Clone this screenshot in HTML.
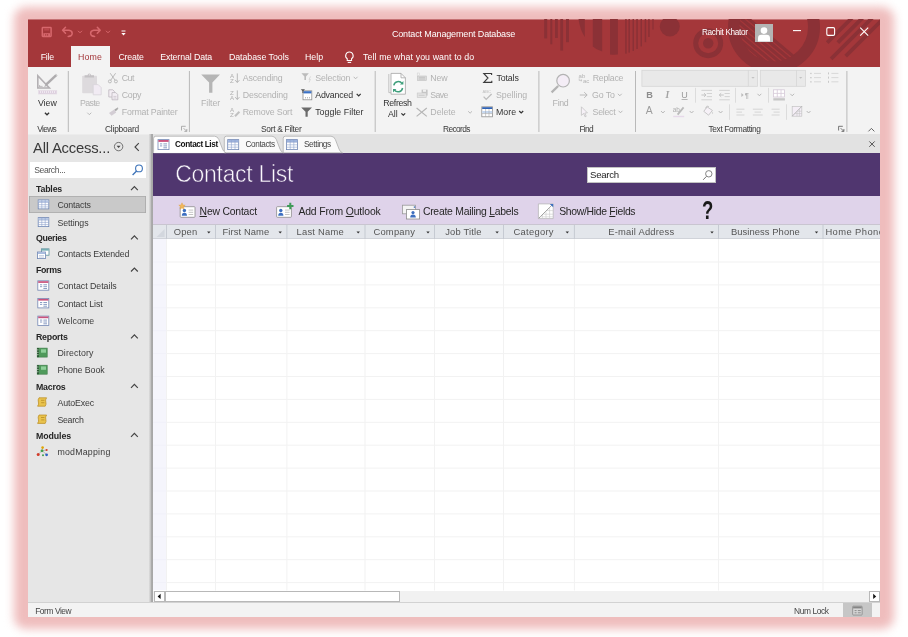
<!DOCTYPE html>
<html><head><meta charset="utf-8"><title>Contact Management Database</title>
<style>
html,body{margin:0;padding:0;background:#fff;}
body{width:908px;height:637px;position:relative;overflow:hidden;font-family:"Liberation Sans",sans-serif;font-size:9px;color:#333;}
#glow{position:absolute;left:14.2px;top:7px;width:879.8px;height:621.5px;background:#efbdbd;border-radius:12px;filter:blur(4.7px);}
#win{opacity:.999;position:absolute;left:28px;top:19px;width:852px;height:598px;background:#fff;overflow:hidden;}
.abs{position:absolute;}
.t{position:absolute;white-space:nowrap;line-height:12px;height:12px;}
#title{position:absolute;left:0;top:0;width:852px;height:49px;background:#a4373a;overflow:hidden;}
#ribbon{position:absolute;left:0;top:48px;width:852px;height:67px;background:#f3f3f3;}
#nav{position:absolute;left:0;top:115px;width:121px;height:468px;background:#e6e6e6;}
#split{position:absolute;left:121px;top:115px;width:4px;height:468px;background:linear-gradient(90deg,#dcdcdc 0,#cfcfcf 1.2px,#ababab 2.4px,#a6a6a6 4px);}
#doc{position:absolute;left:125px;top:115px;width:727px;height:468px;background:#fff;overflow:hidden;}
#status{position:absolute;left:0;top:583px;width:852px;height:15px;background:#f3f3f3;box-shadow:inset 0 1px 0 #d2d2d2;}
.tab{top:31.5px;color:#fff;font-size:8.8px;}
</style></head>
<body>
<div id="glow"></div>
<div id="win">
<div id="title">
<svg class="abs" style="left:0;top:0" width="852" height="49" viewBox="28 19 852 49">
<rect x="28" y="19" width="852" height="0.45" fill="#efbdbd"/>
<g fill="#8b3136">
<rect x="544.2" y="19" width="3" height="19.4"/>
<rect x="550.3" y="19" width="2" height="25.3"/>
<rect x="555" y="19" width="2.8" height="19"/>
<rect x="560.3" y="19" width="2.8" height="31.6"/>
<rect x="566" y="19" width="3" height="23.2"/>
<path d="M578.5 19 L584.8 19 L584.8 37 Q580 30 578.5 19Z"/>
<path d="M592.8 19 L602.2 19 L602.2 51.6 Q596 49.5 592.8 46.4Z"/>
<path d="M610 19 L617.9 19 L617.9 54.6 Q613 55 610 54.4Z"/>
<rect x="625.2" y="19" width="1.5" height="34.7"/>
<rect x="628.4" y="19" width="1.6" height="33.6"/>
<rect x="632.5" y="19" width="1.5" height="32"/>
<rect x="636.3" y="19" width="1.5" height="30"/>
<rect x="640.5" y="19" width="1.5" height="27.4"/>
<rect x="644.7" y="19" width="1.5" height="23.2"/>
<rect x="648.2" y="19" width="1.5" height="18"/>
<rect x="652.4" y="19" width="1.2" height="10.6"/>
<circle cx="669.8" cy="26.5" r="10"/>
<circle cx="708.2" cy="43.2" r="5.2"/>
</g>
<circle cx="708.2" cy="43.2" r="12.5" fill="none" stroke="#8b3136" stroke-width="5"/>
<circle cx="774" cy="27" r="40" fill="none" stroke="#8b3136" stroke-width="12"/>
<clipPath id="cpin"><circle cx="774" cy="27" r="34.5"/></clipPath>
<g clip-path="url(#cpin)"><path d="M722.7 -4.9 L845.3 97.9 L793.9 159.2 L671.3 56.4Z" fill="#8b3136"/><g stroke="#a4373a" stroke-width="1.3"><path d="M720.3 -2.0 L842.8 100.8"/><path d="M717.4 1.4 L840.0 104.2"/><path d="M714.6 4.7 L837.2 107.6"/><path d="M711.8 8.1 L834.4 110.9"/><path d="M709.0 11.5 L831.5 114.3"/><path d="M706.1 14.8 L828.7 117.7"/><path d="M703.3 18.2 L825.9 121.1"/><path d="M700.5 21.6 L823.0 124.4"/><path d="M697.6 25.0 L820.2 127.8"/></g></g>
<g stroke="#8b3136" stroke-width="3.8" fill="none"><path d="M827.2 42.6 L872.2 -2.3999999999999986"/><path d="M837.8 42.6 L882.8 -2.3999999999999986"/><path d="M831.1 58.9 L876.1 13.899999999999999"/><path d="M845.7 56.2 L890.7 11.200000000000003"/></g>
</svg>
<!-- QAT icons -->
<svg class="abs" style="left:0;top:0" width="140" height="26" viewBox="28 19 140 26" fill="none" stroke="#d7686d" stroke-width="1.5">
<rect x="42.3" y="27.6" width="8.8" height="8.8" rx="0.6"/>
<rect x="44.2" y="28" width="5" height="2.6" fill="#b9474b" stroke="none"/>
<rect x="43.400" y="33.200" width="6.600" height="3.200" fill="#d7686d" stroke="none"/><rect x="45.200" y="34.200" width="1.100" height="1.400" fill="#a4373a" stroke="none"/><rect x="47.100" y="34.200" width="1.100" height="1.400" fill="#a4373a" stroke="none"/>
<path d="M65.5 27.3 L62.6 30.3 L65.5 33.3 M62.8 30.3 H69 Q72.2 30.6 72.2 33.4 Q72 36.2 68.2 36.4" stroke-linecap="round" stroke-linejoin="round"/>
<path d="M78 30.8 l2 2 l2 -2" stroke-width="1"/>
<path d="M97.3 27.3 L100.2 30.3 L97.3 33.3 M100 30.3 H93.8 Q90.6 30.6 90.6 33.4 Q90.8 36.2 94.6 36.4" stroke-linecap="round" stroke-linejoin="round"/>
<path d="M106 30.8 l2 2 l2 -2" stroke-width="1"/>
<path d="M121.5 31 h4" stroke="#fff" stroke-width="1"/>
<path d="M121.3 33 h4.4 l-2.2 2.4z" fill="#fff" stroke="none"/>
</svg>
<svg class="abs" style="left:726.5px;top:5px" width="18" height="18" viewBox="0 0 18 18"><rect width="18" height="18" fill="#b4b4b4"/><circle cx="9" cy="6.6" r="3.3" fill="#fff"/><path d="M3 17.5 v-3.4 q0 -3.4 3.4 -3.4 h5.2 q3.4 0 3.4 3.4 v3.4z" fill="#fff"/></svg>
<svg class="abs" style="left:760px;top:4px" width="90" height="18" viewBox="788 23 90 18" fill="none" stroke="#fff" stroke-width="1.1">
<path d="M793 30.6 h8"/>
<rect x="826.8" y="27.6" width="7.8" height="7.8" rx="1.3"/>
<path d="M860.2 27.6 l8 8 M868.2 27.6 l-8 8"/>
</svg>
<!-- tabs -->
<div class="abs" style="left:43px;top:26.600px;width:39px;height:22.400px;background:#f3f3f3"></div>
<svg class="abs" style="left:316.2px;top:31.6px" width="10.8" height="14" viewBox="0 0 10 13" fill="none" stroke="#fff" stroke-width="1"><path d="M5 1 a3.4 3.4 0 0 1 2 6.2 v1.6 h-4 v-1.6 a3.4 3.4 0 0 1 2 -6.200"/><path d="M3.4 10.6 h3.2"/></svg>
<span class="t" style="left:363.9px;top:8.8px;color:#fff;font-size:9.00px;letter-spacing:-0.14px;line-height:12px;height:12px;">Contact Management Database</span>
<span class="t" style="left:674.0px;top:8.1px;color:#fff;font-size:8.20px;letter-spacing:-0.30px;line-height:12px;height:12px;">Rachit Khator</span>
<span class="t" style="left:12.7px;top:31.6px;color:#fff;font-size:8.80px;letter-spacing:-0.22px;line-height:12px;height:12px;">File</span>
<span class="t" style="left:49.9px;top:31.6px;color:#a4373a;font-size:8.80px;letter-spacing:0.16px;line-height:12px;height:12px;">Home</span>
<span class="t" style="left:90.4px;top:31.6px;color:#fff;font-size:8.80px;letter-spacing:-0.17px;line-height:12px;height:12px;">Create</span>
<span class="t" style="left:132.2px;top:31.6px;color:#fff;font-size:8.80px;letter-spacing:-0.11px;line-height:12px;height:12px;">External Data</span>
<span class="t" style="left:200.9px;top:31.6px;color:#fff;font-size:8.80px;letter-spacing:-0.03px;line-height:12px;height:12px;">Database Tools</span>
<span class="t" style="left:277.0px;top:31.6px;color:#fff;font-size:8.80px;letter-spacing:-0.02px;line-height:12px;height:12px;">Help</span>
<span class="t" style="left:335.0px;top:31.6px;color:#fff;font-size:8.80px;letter-spacing:0.10px;line-height:12px;height:12px;">Tell me what you want to do</span>

</div>
<div id="ribbon">
<svg class="abs" style="left:0;top:0" width="852" height="67" viewBox="28 67 852 67"><rect x="67.8" y="71" width="1" height="61" fill="#b9b9b9"/>
<rect x="188.9" y="71" width="1" height="61" fill="#b9b9b9"/>
<rect x="374.7" y="71" width="1" height="61" fill="#b9b9b9"/>
<rect x="538.4" y="71" width="1" height="61" fill="#b9b9b9"/>
<rect x="635.0" y="71" width="1" height="61" fill="#b9b9b9"/>
<rect x="846.4" y="71" width="1" height="61" fill="#b9b9b9"/>
<rect x="695.1" y="87.8" width="0.8" height="14.9" fill="#d6d6d6"/>
<rect x="735.0" y="87.8" width="0.8" height="14.9" fill="#d6d6d6"/>
<rect x="768.1" y="87.8" width="0.8" height="14.9" fill="#d6d6d6"/>
<rect x="729.0" y="104.3" width="0.8" height="15.5" fill="#d6d6d6"/>
<rect x="786.2" y="104.3" width="0.8" height="15.5" fill="#d6d6d6"/>
<path d="M37.8 75.8 V88 H49.4 Z" fill="none" stroke="#b3b0b3" stroke-width="1.6" stroke-linejoin="miter"/>
<path d="M39.2 86.4 h3.4 M39.6 85 v2" stroke="#b3b0b3" stroke-width="0.8"/>
<path d="M56.8 74.6 L45.8 84.8" stroke="#aeacae" stroke-width="2.5"/>
<path d="M55 73.6 L57.8 76.4" stroke="#f3f3f3" stroke-width="0.7"/>
<path d="M46 84.6 L43.8 86.8 L46.6 86.2Z" fill="#aeacae"/>
<rect x="38.6" y="90.6" width="18.2" height="3.4" fill="#ddd0df" stroke="#e4dbe5" stroke-width="0.6"/>
<path d="M40.5 91.2 v1.6 M42.5 91.2 v1.6 M44.5 91.2 v1.6 M46.5 91.2 v1.6 M48.5 91.2 v1.6 M50.5 91.2 v1.6 M52.5 91.2 v1.6 M54.5 91.2 v1.6" stroke="#f6f1f7" stroke-width="0.9"/>
<path d="M44.9 112.8 L47.0 114.8 L49.1 112.8" fill="none" stroke="#333" stroke-width="1.3"/>
<rect x="82.2" y="75.8" width="14.8" height="17.4" rx="0.8" fill="#dddadd"/>
<path d="M84.6 77.4 v-2.2 h3 a1.7 1.7 0 0 1 3.400 0 h3 v2.200z" fill="#c4c1c4"/><circle cx="89.300" cy="74.800" r="0.600" fill="#f3f3f3"/>
<path d="M93.2 84.6 h5 l3 3 v7.2 h-8z" fill="#f1ebf3" stroke="#d8d3d9" stroke-width="0.8"/>
<path d="M87.3 112.7 L89.3 114.7 L91.3 112.7" fill="none" stroke="#b2b2b2" stroke-width="0.9"/>
<g fill="none" stroke="#b4b4b4" stroke-width="0.9"><path d="M110.2 73.2 L115.2 80.4 M115.6 73.2 L110.6 80.4"/><circle cx="109.9" cy="81.4" r="1.5"/><circle cx="115.9" cy="81.4" r="1.5"/></g>
<g fill="#f3eef4" stroke="#bdb6be" stroke-width="0.8"><path d="M108.8 89.8 h4 l1.6 1.6 v5.6 h-5.600z"/><path d="M112 92.600 h3.800 l2 2 v5.200 h-5.800z"/></g><path d="M113.400 96.400 h3 M113.400 98 h3" stroke="#bdb6be" stroke-width="0.6"/>
<path d="M109 113 l5.200 -3.400 l2 3 l-4.600 3.200z" fill="#d3cdd4"/><path d="M114.400 109.600 l2.400 -1.600 l1 1.600 l-2.200 1.600z" fill="#a9a9a9"/><circle cx="117.600" cy="108.200" r="0.700" fill="#a9a9a9"/>
<path d="M181.5 130.5 v-4.2 h4.200" fill="none" stroke="#9a9a9a" stroke-width="0.8"/><path d="M183.6 128.2 l3 3 M186.8 129 v2.400 h-2.400" fill="none" stroke="#9a9a9a" stroke-width="0.8"/>
<path d="M838.6 130.5 v-4.2 h4.200" fill="none" stroke="#555" stroke-width="0.8"/><path d="M840.7 128.2 l3 3 M843.9 129 v2.400 h-2.400" fill="none" stroke="#555" stroke-width="0.8"/>
<path d="M201.200 74.600 H220 L212.400 82.600 V92.800 H209.100 V82.600Z" fill="#b5b5b5"/>
<text x="230" y="77.6" font-family="Liberation Sans" font-size="6.200" fill="#b0b0b0">A</text><text x="230" y="82.9" font-family="Liberation Sans" font-size="6.200" fill="#b0b0b0">Z</text>
<path d="M237.300 73.400 V82.400 M235.200 80.200 L237.300 82.500 L239.400 80.200" fill="none" stroke="#b0b0b0" stroke-width="0.9"/>
<text x="230" y="94.6" font-family="Liberation Sans" font-size="6.200" fill="#b0b0b0">Z</text><text x="230" y="99.9" font-family="Liberation Sans" font-size="6.200" fill="#b0b0b0">A</text>
<path d="M237.300 90.400 V99.400 M235.200 97.200 L237.300 99.500 L239.400 97.200" fill="none" stroke="#b0b0b0" stroke-width="0.9"/>
<text x="230" y="111.6" font-family="Liberation Sans" font-size="6.200" fill="#b0b0b0">A</text><text x="230" y="116.9" font-family="Liberation Sans" font-size="6.200" fill="#b0b0b0">Z</text>
<path d="M235 116.200 l4.400 -4.400" stroke="#c0c0c0" stroke-width="2"/>
<path d="M301.400 73.200 H308.800 L306 76.400 V80 H304.400 V76.400Z" fill="#bcbcbc"/><path d="M310.600 76.400 l-1.600 3 h1.400 l-1.400 3" fill="none" stroke="#cfcfcf" stroke-width="0.7"/>
<path d="M353.7 76.8 L355.6 78.8 L357.5 76.8" fill="none" stroke="#b2b2b2" stroke-width="0.9"/>
<rect x="303" y="90.800" width="8.800" height="9" fill="#fff" stroke="#8f8f8f" stroke-width="0.8"/><rect x="303.400" y="91.200" width="8" height="2.200" fill="#3b72c6"/><path d="M305 97.800 h1 M307 97.800 h1 M309 97.800 h1" stroke="#888" stroke-width="0.8"/><path d="M300.800 89.200 h4.200 l-1.600 1.800 v2 h-1 v-2z" fill="#555"/>
<path d="M356.7 93.8 L358.7 95.8 L360.7 93.8" fill="none" stroke="#333" stroke-width="1.2"/>
<path d="M301.200 107.400 H312 L307.700 111.800 V116.800 H305.500 V111.800Z" fill="#6a6a6a"/>
<path d="M388.800 74 v18.600 h2" fill="none" stroke="#b5b5b5" stroke-width="0.8"/>
<path d="M391 73.400 h10 l4.400 4.400 v16.400 h-14.400z" fill="#fff" stroke="#a4a4a4" stroke-width="0.8"/><path d="M401 73.400 v4.400 h4.400" fill="none" stroke="#a4a4a4" stroke-width="0.8"/>
<g fill="none" stroke="#3f9f7c" stroke-width="1.500"><path d="M393.800 85.400 a4.600 4.600 0 0 1 8.200 -2"/><path d="M402.600 88 a4.600 4.600 0 0 1 -8.200 2"/></g><path d="M403.400 81 v3.400 h-3.400z" fill="#3f9f7c"/><path d="M393 92.400 v-3.400 h3.400z" fill="#3f9f7c"/>
<path d="M401.4 113.3 L403.3 115.2 L405.2 113.3" fill="none" stroke="#333" stroke-width="1.2"/>
<rect x="417.400" y="76" width="9" height="4.600" fill="#d9d9d9" stroke="#c2c2c2" stroke-width="0.6"/><path d="M419 77.400 h6 M419 79 h6" stroke="#bdbdbd" stroke-width="0.700"/><rect x="417.200" y="73" width="2.400" height="2.400" fill="#f3f3f3" stroke="#cfcfcf" stroke-width="0.5"/>
<rect x="421.600" y="89.600" width="6" height="6" fill="#c5c5c5"/><rect x="423" y="89.600" width="3" height="2.200" fill="#f0f0f0"/><rect x="417.200" y="93" width="9" height="4.600" fill="#e4e4e4" stroke="#c6c6c6" stroke-width="0.6"/><path d="M418.600 95.300 h6" stroke="#c0c0c0" stroke-width="0.7"/>
<path d="M416.600 108 L426.800 116.400 M426.800 108 L416.600 116.400" stroke="#b5b5b5" stroke-width="1.200"/>
<path d="M468.2 111.3 L470.1 113.2 L472.0 111.3" fill="none" stroke="#b2b2b2" stroke-width="0.9"/>
<path d="M491.600 75 V73.500 H483.800 L488 78 L483.800 82.400 H491.800 V80.800" fill="none" stroke="#3a3a3a" stroke-width="1.100"/>
<text x="482.600" y="93" font-family="Liberation Sans" font-size="4.200" fill="#c0c0c0" letter-spacing="-0.1">ABC</text><path d="M483.600 96.600 l2.600 2.800 l5.400 -5.400" fill="none" stroke="#bdbdbd" stroke-width="1.300"/>
<rect x="481.800" y="106.800" width="10.800" height="10" fill="#fff" stroke="#8f8f8f" stroke-width="0.8"/><rect x="482.200" y="107.200" width="10" height="1.800" fill="#2f62b5"/><rect x="482.200" y="111" width="10" height="2.400" fill="#c5d7ef"/><path d="M485.600 109 v7.600 M489 109 v7.600 M482 113.600 h10.400" stroke="#a9a9a9" stroke-width="0.600"/>
<path d="M519.2 111.0 L521.2 113.0 L523.2 111.0" fill="none" stroke="#333" stroke-width="1.2"/>
<circle cx="563.100" cy="80.700" r="6.300" fill="#f4edf6" stroke="#b3b3b3" stroke-width="1.200"/><path d="M558.200 86 L551.600 92.400" stroke="#b3b3b3" stroke-width="2.200"/>
<text x="578.600" y="77.600" font-family="Liberation Sans" font-size="6" fill="#b4b4b4">ab</text><text x="583" y="82.900" font-family="Liberation Sans" font-size="6" fill="#b4b4b4">ac</text><path d="M579.200 78.400 v2 h2.600 M580.800 79.300 l1.200 1.100 l-1.200 1.100" fill="none" stroke="#b4b4b4" stroke-width="0.600"/>
<path d="M579.800 95 H587 M584.200 92.200 L587.200 95 L584.200 97.800" fill="none" stroke="#b4b4b4" stroke-width="0.900"/>
<path d="M617.9 93.8 L619.8 95.8 L621.7 93.8" fill="none" stroke="#b2b2b2" stroke-width="0.9"/>
<path d="M581.400 106.800 V115.400 L583.600 113.400 L585 116.800 L586.200 116.300 L584.800 113 L587.400 112.800Z" fill="#f6f1f7" stroke="#bdbdbd" stroke-width="0.700"/>
<path d="M618.6 110.8 L620.5 112.8 L622.4 110.8" fill="none" stroke="#b2b2b2" stroke-width="0.9"/>
<rect x="641.900" y="70.300" width="115.600" height="16" fill="#e9e9e9" stroke="#d6d6d6" stroke-width="0.800"/><path d="M748.400 70.300 v16" stroke="#d6d6d6" stroke-width="0.800"/><path d="M751.400 77 h3.200 l-1.600 1.800z" fill="#c2c2c2"/>
<rect x="760.300" y="70.300" width="45.200" height="16" fill="#e9e9e9" stroke="#d6d6d6" stroke-width="0.800"/><path d="M796.500 70.300 v16" stroke="#d6d6d6" stroke-width="0.800"/><path d="M799.100 77 h3.200 l-1.600 1.800z" fill="#c2c2c2"/>
<rect x="810.200" y="72.8" width="1.400" height="1.300" fill="#c8c8c8"/><path d="M814 73.4 h7" stroke="#d0d0d0" stroke-width="0.800"/>
<rect x="828" y="72.4" width="1" height="2" fill="#c8c8c8"/><path d="M831.400 73.4 h7" stroke="#d0d0d0" stroke-width="0.800"/>
<rect x="810.200" y="77.0" width="1.400" height="1.300" fill="#c8c8c8"/><path d="M814 77.6 h7" stroke="#d0d0d0" stroke-width="0.800"/>
<rect x="828" y="76.6" width="1" height="2" fill="#c8c8c8"/><path d="M831.400 77.6 h7" stroke="#d0d0d0" stroke-width="0.800"/>
<rect x="810.200" y="81.2" width="1.400" height="1.300" fill="#c8c8c8"/><path d="M814 81.8 h7" stroke="#d0d0d0" stroke-width="0.800"/>
<rect x="828" y="80.8" width="1" height="2" fill="#c8c8c8"/><path d="M831.400 81.8 h7" stroke="#d0d0d0" stroke-width="0.800"/>
<text x="646.300" y="98.400" font-family="Liberation Sans" font-weight="bold" font-size="9.200" fill="#8d8d8d">B</text>
<text x="665.600" y="98.400" font-family="Liberation Serif" font-style="italic" font-weight="bold" font-size="9.600" fill="#a3a3a3">I</text>
<text x="681.300" y="98" font-family="Liberation Sans" font-size="9" fill="#9a9a9a">U</text><path d="M681.600 99.500 h6" stroke="#9a9a9a" stroke-width="0.700"/>
<path d="M701.4 90.400 h10.600 M701.4 99.800 h10.600 M706.8 93.500 h5.200 M706.8 96.600 h5.200" stroke="#c4c4c4" stroke-width="0.700"/>
<path d="M701.4 95 h4.400 M704.0 93.200 l1.900 1.800 l-1.900 1.800" fill="none" stroke="#b8b8b8" stroke-width="0.800"/>
<path d="M719.2 90.400 h10.600 M719.2 99.800 h10.600 M724.6 93.500 h5.200 M724.6 96.600 h5.200" stroke="#c4c4c4" stroke-width="0.700"/>
<path d="M719.4000000000001 95 h4.400 M721.2 93.200 l-1.900 1.800 l1.900 1.800" fill="none" stroke="#b8b8b8" stroke-width="0.800"/>
<path d="M741.400 93 l2.200 2 l-2.200 2z" fill="#b8b8b8"/><text x="744.800" y="98.200" font-family="Liberation Sans" font-weight="bold" font-size="7.400" fill="#b4b4b4">¶</text>
<path d="M757.5 93.8 L759.4 95.8 L761.3 93.8" fill="none" stroke="#b2b2b2" stroke-width="0.9"/>
<rect x="773.600" y="89.800" width="11" height="7.200" fill="#fff" stroke="#d5c9d8" stroke-width="0.800"/><path d="M777.300 89.800 v7.200 M781 89.800 v7.200 M773.600 93.400 h11" stroke="#d5c9d8" stroke-width="0.800"/><rect x="773.300" y="98.200" width="11.600" height="2.300" fill="#c6c6c6"/>
<path d="M790.3 93.8 L792.2 95.8 L794.1 93.8" fill="none" stroke="#b2b2b2" stroke-width="0.9"/>
<text x="645.800" y="114.400" font-family="Liberation Sans" font-size="10.400" fill="#9c9c9c">A</text>
<path d="M661.0 111.0 L662.9 113.0 L664.8 111.0" fill="none" stroke="#b2b2b2" stroke-width="0.9"/>
<text x="672.800" y="111.800" font-family="Liberation Sans" font-size="6.400" fill="#adadad">ab</text><path d="M683.600 107.400 L677.600 114.600" stroke="#b9b9b9" stroke-width="1.800"/><rect x="673.200" y="115.800" width="11" height="1.400" fill="#e7d9ea"/>
<path d="M689.7 111.0 L691.6 113.0 L693.5 111.0" fill="none" stroke="#b2b2b2" stroke-width="0.9"/>
<path d="M707 106.800 L703.800 111.400 L708.600 115.200 L712.400 110.400 Z" fill="#f6f1f7" stroke="#bdbdbd" stroke-width="0.800"/><path d="M706 108.600 a1.600 1.600 0 0 1 3 -1.600" fill="none" stroke="#bdbdbd" stroke-width="0.700"/><path d="M712.600 111.400 q1 1.800 0.200 2.800 q-0.900 -1.100 -0.200 -2.800" fill="#bdbdbd"/>
<path d="M718.7 111.0 L720.6 113.0 L722.5 111.0" fill="none" stroke="#b2b2b2" stroke-width="0.9"/>
<path d="M736.4 109.2 h8" stroke="#cdcdcd" stroke-width="0.800"/>
<path d="M736.4 112.1 h5.6" stroke="#cdcdcd" stroke-width="0.800"/>
<path d="M736.4 115.0 h8" stroke="#cdcdcd" stroke-width="0.800"/>
<path d="M752.9 109.2 h9.8" stroke="#cdcdcd" stroke-width="0.800"/>
<path d="M754.6 112.1 h6.4" stroke="#cdcdcd" stroke-width="0.800"/>
<path d="M752.9 115.0 h9.8" stroke="#cdcdcd" stroke-width="0.800"/>
<path d="M771.6 109.2 h8" stroke="#cdcdcd" stroke-width="0.800"/>
<path d="M773.6 112.1 h6" stroke="#cdcdcd" stroke-width="0.800"/>
<path d="M771.6 115.0 h8" stroke="#cdcdcd" stroke-width="0.800"/>
<rect x="792.200" y="106.400" width="9.600" height="9.800" fill="#f4eef6" stroke="#c4c4c4" stroke-width="0.700"/><path d="M801.800 106.400 L792.200 116.200" stroke="#aaa" stroke-width="0.800"/><path d="M797 111.400 v4.800 M799.400 109 v7.200 M794.600 113.600 h7.200 M797.400 111.200 h4.400" stroke="#c4c4c4" stroke-width="0.600"/>
<path d="M806.7 111.0 L808.6 113.0 L810.5 111.0" fill="none" stroke="#b2b2b2" stroke-width="0.9"/>
<path d="M868.400 131.400 L871.400 128.400 L874.400 131.400" fill="none" stroke="#555" stroke-width="0.900"/></svg>
<span class="t" style="left:9.9px;top:30.0px;color:#333;font-size:8.80px;letter-spacing:0.02px;line-height:12px;height:12px;">View</span>
<span class="t" style="left:9.2px;top:56.0px;color:#383838;font-size:8.40px;letter-spacing:-0.65px;line-height:12px;height:12px;">Views</span>
<span class="t" style="left:52.0px;top:30.0px;color:#b2b2b2;font-size:8.80px;letter-spacing:-0.58px;line-height:12px;height:12px;">Paste</span>
<span class="t" style="left:93.7px;top:5.4px;color:#b2b2b2;font-size:8.80px;letter-spacing:-0.43px;line-height:12px;height:12px;">Cut</span>
<span class="t" style="left:93.7px;top:22.4px;color:#b2b2b2;font-size:8.80px;letter-spacing:-0.24px;line-height:12px;height:12px;">Copy</span>
<span class="t" style="left:93.7px;top:39.2px;color:#b2b2b2;font-size:8.80px;letter-spacing:-0.16px;line-height:12px;height:12px;">Format Painter</span>
<span class="t" style="left:77.0px;top:56.0px;color:#383838;font-size:8.40px;letter-spacing:-0.21px;line-height:12px;height:12px;">Clipboard</span>
<span class="t" style="left:173.0px;top:30.0px;color:#b2b2b2;font-size:8.80px;letter-spacing:-0.08px;line-height:12px;height:12px;">Filter</span>
<span class="t" style="left:214.7px;top:5.4px;color:#b2b2b2;font-size:8.80px;letter-spacing:-0.13px;line-height:12px;height:12px;">Ascending</span>
<span class="t" style="left:214.7px;top:22.4px;color:#b2b2b2;font-size:8.80px;letter-spacing:-0.14px;line-height:12px;height:12px;">Descending</span>
<span class="t" style="left:214.7px;top:39.2px;color:#b2b2b2;font-size:8.80px;letter-spacing:-0.17px;line-height:12px;height:12px;">Remove Sort</span>
<span class="t" style="left:287.2px;top:5.4px;color:#b2b2b2;font-size:8.80px;letter-spacing:-0.11px;line-height:12px;height:12px;">Selection</span>
<span class="t" style="left:287.2px;top:22.4px;color:#333;font-size:8.80px;letter-spacing:-0.17px;line-height:12px;height:12px;">Advanced</span>
<span class="t" style="left:287.2px;top:39.2px;color:#333;font-size:8.80px;letter-spacing:0.03px;line-height:12px;height:12px;">Toggle Filter</span>
<span class="t" style="left:233.0px;top:56.0px;color:#383838;font-size:8.40px;letter-spacing:-0.29px;line-height:12px;height:12px;">Sort &amp; Filter</span>
<span class="t" style="left:355.3px;top:30.0px;color:#333;font-size:8.80px;letter-spacing:-0.36px;line-height:12px;height:12px;">Refresh</span>
<span class="t" style="left:359.9px;top:41.4px;color:#333;font-size:8.80px;letter-spacing:0.04px;line-height:12px;height:12px;">All</span>
<span class="t" style="left:402.3px;top:5.4px;color:#b2b2b2;font-size:8.80px;letter-spacing:-0.17px;line-height:12px;height:12px;">New</span>
<span class="t" style="left:402.3px;top:22.4px;color:#b2b2b2;font-size:8.77px;letter-spacing:-0.60px;line-height:12px;height:12px;">Save</span>
<span class="t" style="left:402.3px;top:39.2px;color:#b2b2b2;font-size:8.80px;letter-spacing:-0.02px;line-height:12px;height:12px;">Delete</span>
<span class="t" style="left:468.5px;top:5.4px;color:#333;font-size:8.80px;letter-spacing:-0.13px;line-height:12px;height:12px;">Totals</span>
<span class="t" style="left:467.9px;top:22.4px;color:#b2b2b2;font-size:8.80px;letter-spacing:0.01px;line-height:12px;height:12px;">Spelling</span>
<span class="t" style="left:467.9px;top:39.2px;color:#333;font-size:8.80px;letter-spacing:0.09px;line-height:12px;height:12px;">More</span>
<span class="t" style="left:415.0px;top:56.0px;color:#383838;font-size:8.40px;letter-spacing:-0.61px;line-height:12px;height:12px;">Records</span>
<span class="t" style="left:524.6px;top:30.0px;color:#b2b2b2;font-size:8.80px;letter-spacing:-0.33px;line-height:12px;height:12px;">Find</span>
<span class="t" style="left:564.8px;top:5.4px;color:#b2b2b2;font-size:8.80px;letter-spacing:-0.28px;line-height:12px;height:12px;">Replace</span>
<span class="t" style="left:564.0px;top:22.4px;color:#b2b2b2;font-size:8.80px;letter-spacing:-0.08px;line-height:12px;height:12px;">Go To</span>
<span class="t" style="left:564.6px;top:39.2px;color:#b2b2b2;font-size:8.80px;letter-spacing:-0.28px;line-height:12px;height:12px;">Select</span>
<span class="t" style="left:551.4px;top:56.0px;color:#383838;font-size:8.40px;letter-spacing:-0.66px;line-height:12px;height:12px;">Find</span>
<span class="t" style="left:680.5px;top:56.0px;color:#383838;font-size:8.40px;letter-spacing:-0.37px;line-height:12px;height:12px;">Text Formatting</span>

</div>
<div id="nav">
<div class="abs" style="left:0;top:0;width:121px;height:0.6px;background:#ececec"></div>
<div class="abs" style="left:1.5px;top:27.8px;width:116.6px;height:16.5px;background:#fff"></div>
<div class="abs" style="left:1.2px;top:62px;width:116.900px;height:17.300px;background:#c9c9c9;box-shadow:inset 0 0 0 0.8px #a9a9a9"></div>
<svg class="abs" style="left:0;top:0" width="121" height="468" viewBox="28 134 121 468"><circle cx="118.600" cy="146.600" r="4.200" fill="none" stroke="#555" stroke-width="0.800"/><path d="M116.600 145.800 h4 l-2 2.200z" fill="#444"/>
<path d="M138.800 143.200 L135 147 L138.800 150.800" fill="none" stroke="#444" stroke-width="1.100"/>
<circle cx="139" cy="168.400" r="3.400" fill="none" stroke="#3c72b8" stroke-width="1.100"/><path d="M136.600 171 L132.600 175" stroke="#3c72b8" stroke-width="1.300"/>
<path d="M131 190.1 L134.400 186.7 L137.800 190.1" fill="none" stroke="#444" stroke-width="1.2"/>
<rect x="38.200" y="199.9" width="10.600" height="9" fill="#fff" stroke="#6f86b3" stroke-width="0.800"/><rect x="38.600" y="200.3" width="9.800" height="1.900" fill="#b9c9e6"/><path d="M41.800 199.9 v9 M45.200 199.9 v9 M38.200 202.4 h10.600 M38.200 204.7 h10.600 M38.200 206.9 h10.600" stroke="#8fa3cc" stroke-width="0.600"/>
<rect x="38.200" y="217.6" width="10.600" height="9" fill="#fff" stroke="#6f86b3" stroke-width="0.800"/><rect x="38.600" y="218.0" width="9.800" height="1.900" fill="#b9c9e6"/><path d="M41.800 217.6 v9 M45.200 217.6 v9 M38.200 220.1 h10.600 M38.200 222.4 h10.600 M38.200 224.6 h10.600" stroke="#8fa3cc" stroke-width="0.600"/>
<path d="M131 239.3 L134.400 235.9 L137.800 239.3" fill="none" stroke="#444" stroke-width="1.2"/>
<rect x="41.600" y="248.8" width="7.400" height="6.400" fill="#fff" stroke="#5b8f9a" stroke-width="0.800"/><rect x="41.900" y="249.1" width="6.800" height="1.500" fill="#69a7ad"/><rect x="37.600" y="252.0" width="8" height="6.600" fill="#fff" stroke="#6f86b3" stroke-width="0.800"/><rect x="37.900" y="252.3" width="7.400" height="1.600" fill="#9fb5dc"/><path d="M39 255.6 h5 M39 257.1 h5" stroke="#9fb0cf" stroke-width="0.600"/>
<path d="M131 271.5 L134.400 268.1 L137.800 271.5" fill="none" stroke="#444" stroke-width="1.2"/>
<rect x="37.800" y="280.8" width="11" height="9.400" fill="#fff" stroke="#7488b5" stroke-width="0.800"/><rect x="38.200" y="281.2" width="10.200" height="1.700" fill="#c9527d"/><path d="M40 284.8 h2.200 M43.400 284.8 h3.600 M40 286.7 h2.200 M43.400 286.7 h3.600 M43.400 288.5 h3.600" stroke="#7f93bd" stroke-width="0.900"/>
<rect x="37.800" y="298.5" width="11" height="9.400" fill="#fff" stroke="#7488b5" stroke-width="0.800"/><rect x="38.200" y="298.9" width="10.200" height="1.700" fill="#c9527d"/><path d="M40 302.5 h2.200 M43.400 302.5 h3.600 M40 304.4 h2.200 M43.400 304.4 h3.600 M43.400 306.2 h3.600" stroke="#7f93bd" stroke-width="0.900"/>
<rect x="37.800" y="316.1" width="11" height="9.400" fill="#fff" stroke="#7488b5" stroke-width="0.800"/><rect x="38.200" y="316.5" width="10.200" height="1.700" fill="#c9527d"/><path d="M40 320.1 h2.200 M43.400 320.1 h3.600 M40 322.0 h2.200 M43.400 322.0 h3.600 M43.400 323.8 h3.600" stroke="#7f93bd" stroke-width="0.900"/>
<path d="M131 338.3 L134.400 334.9 L137.800 338.3" fill="none" stroke="#444" stroke-width="1.2"/>
<rect x="37.200" y="348.1" width="10" height="9" fill="#4f9a5b" stroke="#3c7b47" stroke-width="0.600"/><rect x="37" y="348.1" width="2" height="9" fill="#2d5a35"/><rect x="41" y="349.3" width="5" height="3.400" fill="#8fd09a"/><path d="M37 349.9 h1.600 M37 352.3 h1.600 M37 354.7 h1.600" stroke="#cfe6d2" stroke-width="0.700"/>
<rect x="37.200" y="365.2" width="10" height="9" fill="#4f9a5b" stroke="#3c7b47" stroke-width="0.600"/><rect x="37" y="365.2" width="2" height="9" fill="#2d5a35"/><rect x="41" y="366.4" width="5" height="3.400" fill="#8fd09a"/><path d="M37 367.0 h1.600 M37 369.4 h1.600 M37 371.8 h1.600" stroke="#cfe6d2" stroke-width="0.700"/>
<path d="M131 387.8 L134.400 384.4 L137.800 387.8" fill="none" stroke="#444" stroke-width="1.2"/>
<path d="M39 397.8 h7.600 q-1.600 2 -0.800 4.200 q0.800 2.200 -0.600 4.200 h-7.600 q1.600 -2 0.800 -4.200 q-0.800 -2.200 0.600 -4.200z" fill="#e9c34d" stroke="#b98a1e" stroke-width="0.700"/><path d="M41 400.3 h3.400 M41.200 402.7 h3.200" stroke="#a87a14" stroke-width="0.600"/>
<path d="M39 415.0 h7.600 q-1.600 2 -0.800 4.200 q0.800 2.200 -0.600 4.200 h-7.600 q1.600 -2 0.800 -4.200 q-0.800 -2.200 0.600 -4.200z" fill="#e9c34d" stroke="#b98a1e" stroke-width="0.700"/><path d="M41 417.5 h3.400 M41.200 419.9 h3.200" stroke="#a87a14" stroke-width="0.600"/>
<path d="M131 436.8 L134.400 433.4 L137.800 436.8" fill="none" stroke="#444" stroke-width="1.2"/>
<path d="M38 454.6 L42 450.6 L46.600 454.6 M42 450.6 L42.600 447.6 M42 450.6 L46.600 450.1" stroke="#999" stroke-width="0.600" fill="none"/><circle cx="42.600" cy="447.6" r="1.300" fill="#e2a400"/><circle cx="42" cy="450.8" r="1.400" fill="#3f9f4a"/><circle cx="38.200" cy="454.6" r="1.500" fill="#d23c2a"/><circle cx="46.600" cy="454.8" r="1.400" fill="#2d62c4"/><circle cx="46.600" cy="450.0" r="1.100" fill="#d23c2a"/><circle cx="43" cy="455.2" r="1" fill="#3f9f4a"/></svg>
<span class="t" style="left:5.0px;top:3.9px;color:#3a3a3a;font-size:14.80px;letter-spacing:-0.21px;line-height:20px;height:20px;">All Access...</span>
<span class="t" style="left:6.2px;top:30.3px;color:#555;font-size:8.60px;letter-spacing:-0.38px;line-height:12px;height:12px;">Search...</span>
<span class="t" style="left:7.9px;top:49.0px;color:#262626;font-size:8.80px;letter-spacing:-0.17px;line-height:12px;height:12px;font-weight:bold;">Tables</span>
<span class="t" style="left:29.4px;top:65.0px;color:#3b3b3b;font-size:8.80px;letter-spacing:-0.18px;line-height:12px;height:12px;">Contacts</span>
<span class="t" style="left:29.4px;top:82.7px;color:#3b3b3b;font-size:8.80px;letter-spacing:-0.09px;line-height:12px;height:12px;">Settings</span>
<span class="t" style="left:7.9px;top:98.2px;color:#262626;font-size:8.80px;letter-spacing:-0.31px;line-height:12px;height:12px;font-weight:bold;">Queries</span>
<span class="t" style="left:29.4px;top:114.4px;color:#3b3b3b;font-size:8.80px;letter-spacing:-0.14px;line-height:12px;height:12px;">Contacts Extended</span>
<span class="t" style="left:7.9px;top:130.4px;color:#262626;font-size:8.80px;letter-spacing:-0.30px;line-height:12px;height:12px;font-weight:bold;">Forms</span>
<span class="t" style="left:29.4px;top:146.1px;color:#3b3b3b;font-size:8.80px;letter-spacing:-0.02px;line-height:12px;height:12px;">Contact Details</span>
<span class="t" style="left:29.4px;top:163.8px;color:#3b3b3b;font-size:8.80px;letter-spacing:-0.11px;line-height:12px;height:12px;">Contact List</span>
<span class="t" style="left:29.4px;top:181.4px;color:#3b3b3b;font-size:8.80px;letter-spacing:0.06px;line-height:12px;height:12px;">Welcome</span>
<span class="t" style="left:7.9px;top:197.2px;color:#262626;font-size:8.80px;letter-spacing:-0.19px;line-height:12px;height:12px;font-weight:bold;">Reports</span>
<span class="t" style="left:29.4px;top:213.3px;color:#3b3b3b;font-size:8.80px;letter-spacing:0.10px;line-height:12px;height:12px;">Directory</span>
<span class="t" style="left:29.4px;top:230.4px;color:#3b3b3b;font-size:8.80px;letter-spacing:-0.08px;line-height:12px;height:12px;">Phone Book</span>
<span class="t" style="left:7.9px;top:246.7px;color:#262626;font-size:8.80px;letter-spacing:-0.19px;line-height:12px;height:12px;font-weight:bold;">Macros</span>
<span class="t" style="left:29.4px;top:262.7px;color:#3b3b3b;font-size:8.80px;letter-spacing:-0.12px;line-height:12px;height:12px;">AutoExec</span>
<span class="t" style="left:29.4px;top:279.9px;color:#3b3b3b;font-size:8.80px;letter-spacing:-0.28px;line-height:12px;height:12px;">Search</span>
<span class="t" style="left:7.9px;top:295.7px;color:#262626;font-size:8.80px;letter-spacing:-0.07px;line-height:12px;height:12px;font-weight:bold;">Modules</span>
<span class="t" style="left:29.4px;top:312.2px;color:#3b3b3b;font-size:8.80px;letter-spacing:0.23px;line-height:12px;height:12px;">modMapping</span>

</div>
<div id="split"></div>
<div id="doc">
<div class="abs" style="left:0.0px;top:0.0px;width:727.0px;height:19.0px;background:#e2e2e2;"></div>
<div class="abs" style="left:0.0px;top:18.6px;width:727.0px;height:43.4px;background:#50366f;"></div>
<div class="abs" style="left:0.0px;top:62.0px;width:727.0px;height:28.4px;background:#dfd3ea;"></div>
<div class="abs" style="left:0.0px;top:90.4px;width:727.0px;height:14.8px;background:#e3e6eb;border-top:0.6px solid #c9c5d0;border-bottom:0.6px solid #d0d3d9;box-sizing:border-box;"></div>
<div class="abs" style="left:0.0px;top:105.2px;width:13.5px;height:351.3px;background:#f5f5fc;"></div>
<div class="abs" style="left:434.0px;top:33.4px;width:129.0px;height:15.4px;background:#fff;border:0.8px solid #c2c2c2;box-sizing:border-box;"></div>
<div class="abs" style="left:0.0px;top:456.5px;width:727.0px;height:11.5px;background:#f1f1f1;"></div>
<div class="abs" style="left:0.6px;top:456.8px;width:11.0px;height:11.2px;background:#fff;border:0.8px solid #b8b8b8;box-sizing:border-box;"></div>
<div class="abs" style="left:11.8px;top:456.8px;width:234.8px;height:11.2px;background:#fff;border:0.8px solid #b8b8b8;box-sizing:border-box;"></div>
<div class="abs" style="left:716.0px;top:456.8px;width:11.0px;height:11.2px;background:#fff;border:0.8px solid #b8b8b8;box-sizing:border-box;"></div>
<svg class="abs" style="left:0;top:0" width="727" height="468" viewBox="153 134 727 468"><rect x="166.0" y="239.2" width="1" height="351.3" fill="#f2f2f2"/>
<rect x="215.0" y="239.2" width="1" height="351.3" fill="#f2f2f2"/>
<rect x="286.4" y="239.2" width="1" height="351.3" fill="#f2f2f2"/>
<rect x="364.5" y="239.2" width="1" height="351.3" fill="#f2f2f2"/>
<rect x="434.0" y="239.2" width="1" height="351.3" fill="#f2f2f2"/>
<rect x="503.0" y="239.2" width="1" height="351.3" fill="#f2f2f2"/>
<rect x="573.9" y="239.2" width="1" height="351.3" fill="#f2f2f2"/>
<rect x="718.0" y="239.2" width="1" height="351.3" fill="#f2f2f2"/>
<rect x="822.5" y="239.2" width="1" height="351.3" fill="#f2f2f2"/>
<rect x="166.5" y="261.5" width="713.5" height="1" fill="#f2f2f2"/>
<rect x="153" y="261.5" width="13.5" height="1" fill="#f1f1f9"/>
<rect x="166.5" y="284.4" width="713.5" height="1" fill="#f2f2f2"/>
<rect x="153" y="284.4" width="13.5" height="1" fill="#f1f1f9"/>
<rect x="166.5" y="307.3" width="713.5" height="1" fill="#f2f2f2"/>
<rect x="153" y="307.3" width="13.5" height="1" fill="#f1f1f9"/>
<rect x="166.5" y="330.2" width="713.5" height="1" fill="#f2f2f2"/>
<rect x="153" y="330.2" width="13.5" height="1" fill="#f1f1f9"/>
<rect x="166.5" y="353.1" width="713.5" height="1" fill="#f2f2f2"/>
<rect x="153" y="353.1" width="13.5" height="1" fill="#f1f1f9"/>
<rect x="166.5" y="376.0" width="713.5" height="1" fill="#f2f2f2"/>
<rect x="153" y="376.0" width="13.5" height="1" fill="#f1f1f9"/>
<rect x="166.5" y="398.9" width="713.5" height="1" fill="#f2f2f2"/>
<rect x="153" y="398.9" width="13.5" height="1" fill="#f1f1f9"/>
<rect x="166.5" y="421.8" width="713.5" height="1" fill="#f2f2f2"/>
<rect x="153" y="421.8" width="13.5" height="1" fill="#f1f1f9"/>
<rect x="166.5" y="444.7" width="713.5" height="1" fill="#f2f2f2"/>
<rect x="153" y="444.7" width="13.5" height="1" fill="#f1f1f9"/>
<rect x="166.5" y="467.6" width="713.5" height="1" fill="#f2f2f2"/>
<rect x="153" y="467.6" width="13.5" height="1" fill="#f1f1f9"/>
<rect x="166.5" y="490.5" width="713.5" height="1" fill="#f2f2f2"/>
<rect x="153" y="490.5" width="13.5" height="1" fill="#f1f1f9"/>
<rect x="166.5" y="513.4" width="713.5" height="1" fill="#f2f2f2"/>
<rect x="153" y="513.4" width="13.5" height="1" fill="#f1f1f9"/>
<rect x="166.5" y="536.3" width="713.5" height="1" fill="#f2f2f2"/>
<rect x="153" y="536.3" width="13.5" height="1" fill="#f1f1f9"/>
<rect x="166.5" y="559.2" width="713.5" height="1" fill="#f2f2f2"/>
<rect x="153" y="559.2" width="13.5" height="1" fill="#f1f1f9"/>
<rect x="166.5" y="582.1" width="713.5" height="1" fill="#f2f2f2"/>
<rect x="153" y="582.1" width="13.5" height="1" fill="#f1f1f9"/>
<rect x="166.0" y="225" width="1" height="14" fill="#c6cad2"/>
<rect x="215.0" y="225" width="1" height="14" fill="#c6cad2"/>
<rect x="286.4" y="225" width="1" height="14" fill="#c6cad2"/>
<rect x="364.5" y="225" width="1" height="14" fill="#c6cad2"/>
<rect x="434.0" y="225" width="1" height="14" fill="#c6cad2"/>
<rect x="503.0" y="225" width="1" height="14" fill="#c6cad2"/>
<rect x="573.9" y="225" width="1" height="14" fill="#c6cad2"/>
<rect x="718.0" y="225" width="1" height="14" fill="#c6cad2"/>
<rect x="822.5" y="225" width="1" height="14" fill="#c6cad2"/>
<path d="M164.6 229 V237 H156.6Z" fill="#d3d7de"/>
<path d="M207.1 231.400 h3.400 l-1.700 2z" fill="#333"/>
<path d="M278.5 231.400 h3.400 l-1.700 2z" fill="#333"/>
<path d="M356.5 231.400 h3.400 l-1.700 2z" fill="#333"/>
<path d="M426.3 231.400 h3.400 l-1.700 2z" fill="#333"/>
<path d="M495.4 231.400 h3.400 l-1.700 2z" fill="#333"/>
<path d="M565.6 231.400 h3.400 l-1.700 2z" fill="#333"/>
<path d="M710.3 231.400 h3.400 l-1.700 2z" fill="#333"/>
<path d="M814.8 231.400 h3.400 l-1.700 2z" fill="#333"/>
<path d="M283.2 152.800 V138.400 Q283.2 136.200 285.4 136.200 H331 Q334 136.200 335.4 139.600 L339 149 Q340 152 342.5 152.800Z" fill="#fafafa" stroke="#adadad" stroke-width="0.800"/>
<path d="M224.3 152.800 V138.400 Q224.3 136.200 226.5 136.200 H272 Q275 136.200 276.4 139.600 L280 149 Q281 152 283.5 152.800Z" fill="#fafafa" stroke="#adadad" stroke-width="0.800"/>
<path d="M153.6 152.800 V138.400 Q153.6 136.200 155.79999999999998 136.200 H214.5 Q217.5 136.200 218.9 139.600 L222.5 149 Q223.5 152 226.0 152.800Z" fill="#fff" stroke="#adadad" stroke-width="0.800"/>
<rect x="153.900" y="151.600" width="70.400" height="1.300" fill="#fff"/>
<rect x="158" y="139.6" width="11" height="10" fill="#fff" stroke="#7488b5" stroke-width="0.800"/><rect x="158.4" y="140.0" width="10.200" height="1.900" fill="#c9527d"/><path d="M160 143.9 h2.200 M163.4 143.9 h3.600 M160 145.9 h2.200 M163.4 145.9 h3.600 M163.4 147.8 h3.600" stroke="#7f93bd" stroke-width="0.900"/>
<rect x="227.7" y="139.6" width="11" height="10" fill="#fff" stroke="#6f86b3" stroke-width="0.800"/><rect x="228.1" y="140.0" width="10.200" height="2.100" fill="#9db3dd"/><path d="M231.39999999999998 139.6 v10 M235.0 139.6 v10 M227.7 142.3 h11 M227.7 144.8 h11 M227.7 147.2 h11" stroke="#8fa3cc" stroke-width="0.600"/>
<rect x="286.5" y="139.6" width="11" height="10" fill="#fff" stroke="#6f86b3" stroke-width="0.800"/><rect x="286.9" y="140.0" width="10.200" height="2.100" fill="#9db3dd"/><path d="M290.2 139.6 v10 M293.8 139.6 v10 M286.5 142.3 h11 M286.5 144.8 h11 M286.5 147.2 h11" stroke="#8fa3cc" stroke-width="0.600"/>
<path d="M869.300 141.400 l5.400 5.400 M874.700 141.400 l-5.400 5.400" stroke="#444" stroke-width="0.900"/>
<circle cx="708.800" cy="173.800" r="3.200" fill="none" stroke="#777" stroke-width="0.900"/><path d="M706.500 176.300 L703.200 179.800" stroke="#777" stroke-width="1"/>
<rect x="180.2" y="206.7" width="14.8" height="10.6" rx="0.800" fill="#fff" stroke="#8c8c8c" stroke-width="0.800"/><circle cx="184.39999999999998" cy="210.5" r="1.700" fill="#3d6fc0"/><path d="M181.79999999999998 215.7 q0 -3 2.600 -3 q2.600 0 2.600 3z" fill="#3d6fc0"/><path d="M188.6 210.1 h4.600 M188.6 212.29999999999998 h4.600 M188.6 214.5 h4.600" stroke="#b5b5b5" stroke-width="0.800"/>
<path d="M182 202.800 l0.900 2.200 l2.300 0.200 l-1.700 1.600 l0.500 2.300 l-2 -1.200 l-2 1.200 l0.500 -2.300 l-1.700 -1.600 l2.300 -0.200z" fill="#f2b85c" stroke="#e09a2c" stroke-width="0.400"/>
<rect x="276.6" y="206.7" width="14.8" height="10.6" rx="0.800" fill="#fff" stroke="#8c8c8c" stroke-width="0.800"/><circle cx="280.8" cy="210.5" r="1.700" fill="#3d6fc0"/><path d="M278.20000000000005 215.7 q0 -3 2.600 -3 q2.600 0 2.600 3z" fill="#3d6fc0"/><path d="M285.0 210.1 h4.600 M285.0 212.29999999999998 h4.600 M285.0 214.5 h4.600" stroke="#b5b5b5" stroke-width="0.800"/>
<path d="M290.300 202.800 v6.400 M287.100 206 h6.400" stroke="#3e9a58" stroke-width="2"/>
<rect x="402.400" y="205.200" width="13" height="8.600" fill="#f4f4f4" stroke="#9a9a9a" stroke-width="0.800"/><rect x="406.400" y="209.600" width="13.200" height="9.400" fill="#fff" stroke="#8c8c8c" stroke-width="0.800"/><circle cx="413" cy="212.600" r="1.600" fill="#3d6fc0"/><path d="M410.200 217.600 q0 -3 2.800 -3 q2.800 0 2.800 3z" fill="#3d6fc0"/><rect x="413.800" y="206.400" width="1.400" height="1.400" fill="#3d6fc0"/>
<path d="M538.400 203.900 H553.200 V218.600 H538.400Z" fill="#fff" stroke="#b0b0b0" stroke-width="0.700"/><path d="M538.800 218.200 L552.800 204.300" stroke="#888" stroke-width="0.800"/><path d="M549.800 203.900 h3.400 v3.400z" fill="#3d6fc0"/><path d="M546 211.400 v7 M549.600 207.800 v10.600 M542.400 215 v3.400 M543.400 214.200 h9.600 M547 210.600 h6 M540 216.800 h13" stroke="#c9c9c9" stroke-width="0.600"/></svg>
<svg class="abs" style="left:0;top:456px" width="727" height="12" viewBox="153 590 727 12"><path d="M160.600 593.800 v5.200 l-3 -2.600z" fill="#111"/><path d="M873.200 593.800 v5.200 l3 -2.600z" fill="#111"/></svg>
<span class="t" style="left:22.1px;top:5.3px;color:#111;font-size:8.20px;letter-spacing:-0.39px;line-height:12px;height:12px;font-weight:bold;">Contact List</span>
<span class="t" style="left:92.6px;top:5.3px;color:#444;font-size:8.20px;letter-spacing:-0.41px;line-height:12px;height:12px;">Contacts</span>
<span class="t" style="left:151.0px;top:5.3px;color:#444;font-size:8.20px;letter-spacing:-0.35px;line-height:12px;height:12px;">Settings</span>
<span class="t" style="left:22.3px;top:24.8px;color:#fbf9fd;font-size:23.00px;letter-spacing:-0.31px;line-height:30px;height:30px;-webkit-text-stroke:0.55px #50366f;">Contact List</span>
<span class="t" style="left:437.0px;top:35.0px;color:#222;font-size:9.60px;letter-spacing:-0.24px;line-height:12px;height:12px;">Search</span>
<span class="t" style="left:46.6px;top:70.7px;color:#262626;font-size:10.40px;letter-spacing:-0.20px;line-height:14px;height:14px;"><u>N</u>ew Contact</span>
<span class="t" style="left:145.4px;top:70.7px;color:#262626;font-size:10.40px;letter-spacing:-0.13px;line-height:14px;height:14px;">Add From <u>O</u>utlook</span>
<span class="t" style="left:269.9px;top:70.7px;color:#262626;font-size:10.40px;letter-spacing:-0.24px;line-height:14px;height:14px;">Create Mailing <u>L</u>abels</span>
<span class="t" style="left:406.2px;top:70.7px;color:#262626;font-size:10.40px;letter-spacing:-0.30px;line-height:14px;height:14px;">Show/Hide <u>F</u>ields</span>
<span class="t" style="left:549.2px;top:61.400px;font-size:25px;font-weight:bold;line-height:30px;height:30px;color:#1a1a1a;transform:scaleX(0.74);transform-origin:0 0;">?</span>
<span class="t" style="left:20.8px;top:92.0px;color:#555;font-size:9.40px;letter-spacing:0.15px;line-height:12px;height:12px;">Open</span>
<span class="t" style="left:69.4px;top:92.0px;color:#555;font-size:9.40px;letter-spacing:0.11px;line-height:12px;height:12px;">First Name</span>
<span class="t" style="left:143.6px;top:92.0px;color:#555;font-size:9.40px;letter-spacing:0.22px;line-height:12px;height:12px;">Last Name</span>
<span class="t" style="left:220.4px;top:92.0px;color:#555;font-size:9.40px;letter-spacing:0.24px;line-height:12px;height:12px;">Company</span>
<span class="t" style="left:292.2px;top:92.0px;color:#555;font-size:9.40px;letter-spacing:0.17px;line-height:12px;height:12px;">Job Title</span>
<span class="t" style="left:360.4px;top:92.0px;color:#555;font-size:9.40px;letter-spacing:0.30px;line-height:12px;height:12px;">Category</span>
<span class="t" style="left:455.3px;top:92.0px;color:#555;font-size:9.40px;letter-spacing:0.21px;line-height:12px;height:12px;">E-mail Address</span>
<span class="t" style="left:577.9px;top:92.0px;color:#555;font-size:9.40px;letter-spacing:0.08px;line-height:12px;height:12px;">Business Phone</span>
<span class="t" style="left:672.4px;top:92.0px;color:#555;font-size:9.40px;letter-spacing:0.42px;line-height:12px;height:12px;">Home Phone</span>

</div>
<div id="status">
<div class="abs" style="left:815.200px;top:1.400px;width:28.700px;height:13.600px;background:#c6c6c6"></div>
<svg class="abs" style="left:0;top:0" width="852" height="15" viewBox="28 602 852 15"><rect x="852.700" y="606.200" width="9.400" height="8.800" rx="0.600" fill="#d6d6d6" stroke="#858585" stroke-width="0.800"/><rect x="853.100" y="606.600" width="8.600" height="1.800" fill="#858585"/><path d="M854.600 610.600 h2 M857.800 610.600 h3 M854.600 612.800 h2 M857.800 612.800 h3" stroke="#858585" stroke-width="0.900"/></svg>
<span class="t" style="left:7.2px;top:2.6px;color:#444;font-size:8.40px;letter-spacing:-0.43px;line-height:12px;height:12px;">Form View</span>
<span class="t" style="left:766.0px;top:2.6px;color:#444;font-size:8.40px;letter-spacing:-0.39px;line-height:12px;height:12px;">Num Lock</span>

</div>
</div>
</body></html>
